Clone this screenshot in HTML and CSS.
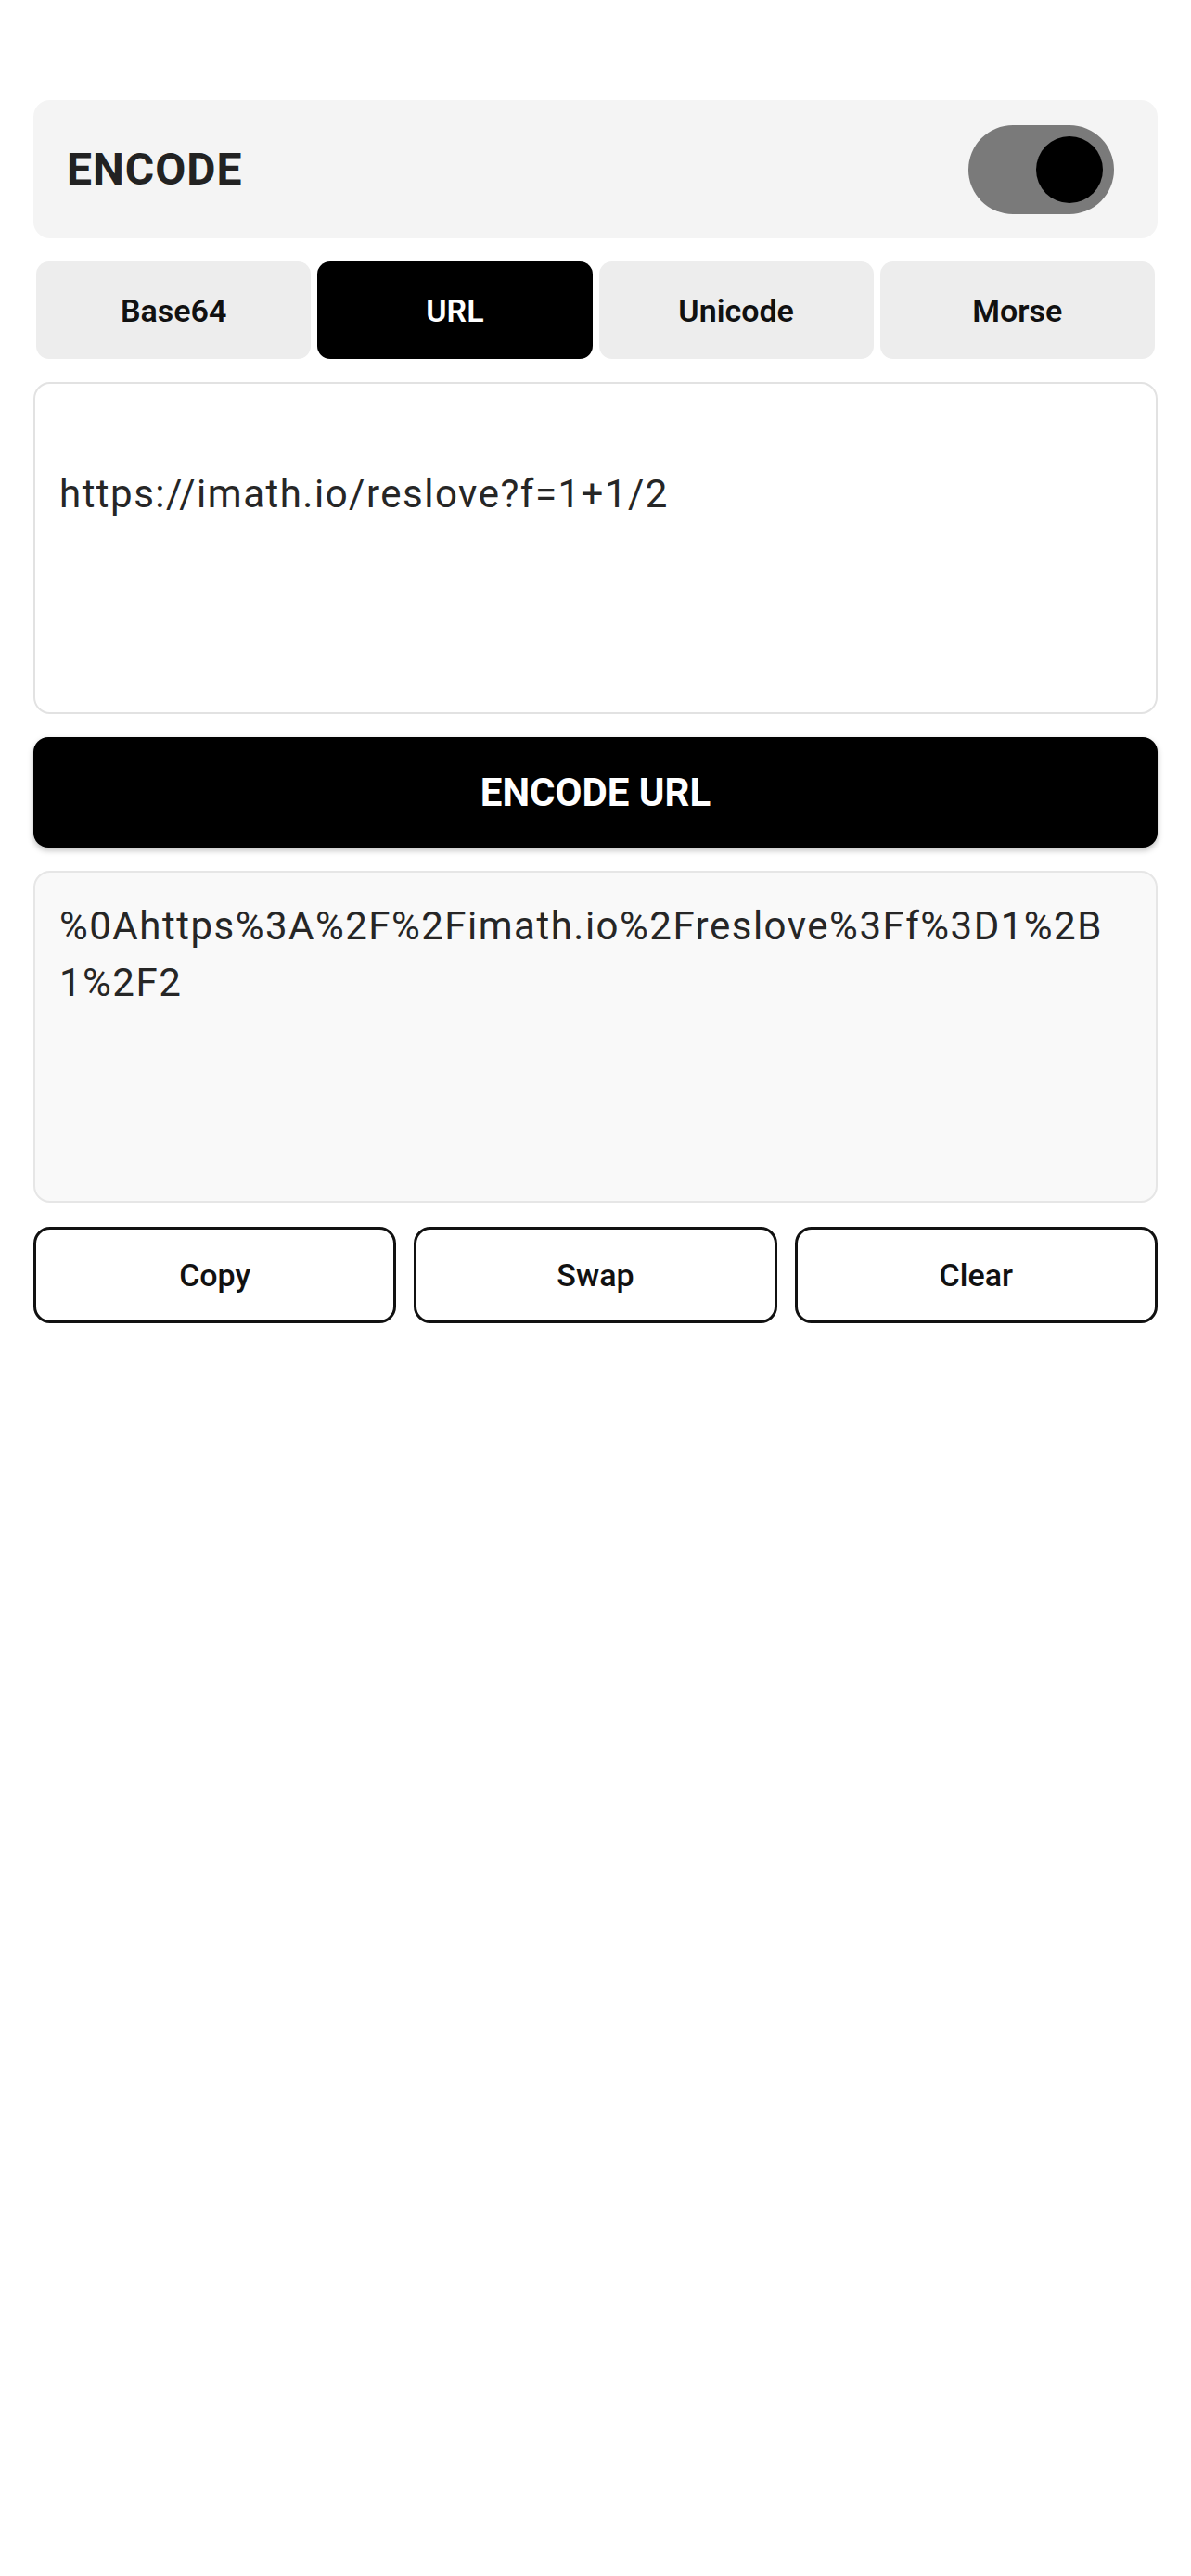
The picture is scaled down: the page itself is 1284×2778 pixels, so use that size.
FILE: index.html
```html
<!DOCTYPE html>
<html lang="en">
<head>
<meta charset="utf-8">
<title>Encode</title>
<link rel="stylesheet" href="styles.css">
</head>
<body>
<main class="page">
  <section class="mode-card">
    <h1 class="mode-title">ENCODE</h1>
    <div class="toggle" role="switch" aria-checked="true"><span class="knob"></span></div>
  </section>

  <nav class="tabs">
    <button class="tab">Base64</button>
    <button class="tab active">URL</button>
    <button class="tab">Unicode</button>
    <button class="tab">Morse</button>
  </nav>

  <div class="field input-field">&#10;https://imath.io/reslove?f=1+1/2</div>

  <button class="primary">ENCODE URL</button>

  <div class="field output-field">%0Ahttps%3A%2F%2Fimath.io%2Freslove%3Ff%3D1%2B1%2F2</div>

  <div class="actions">
    <button class="outline">Copy</button>
    <button class="outline">Swap</button>
    <button class="outline">Clear</button>
  </div>
</main>
</body>
</html>
```

FILE: styles.css
```css
* { box-sizing: border-box; }

html, body {
  margin: 0;
  padding: 0;
  background: #ffffff;
}

body {
  font-family: Roboto, "Liberation Sans", Arial, sans-serif;
  color: #1f1f1f;
}

.page {
  width: 1284px;
  padding: 108px 36px 0;
  display: flex;
  flex-direction: column;
  gap: 25px;
}

.mode-card {
  height: 149px;
  background: #f4f4f4;
  border-radius: 18px;
  display: flex;
  align-items: center;
  justify-content: space-between;
  padding: 0 47px 0 36px;
}

.mode-title {
  margin: 0;
  font-size: 48px;
  font-weight: 700;
  color: #222222;
  letter-spacing: 1px;
}

.toggle {
  width: 157px;
  height: 96px;
  border-radius: 48px;
  background: #7a7a7a;
  display: flex;
  align-items: center;
  justify-content: flex-end;
  padding-right: 12px;
}

.knob {
  width: 72px;
  height: 72px;
  border-radius: 50%;
  background: #000000;
}

.tabs {
  display: flex;
  gap: 7px;
  padding: 0 3px;
}

.tab {
  flex: 1;
  height: 105px;
  border: none;
  border-radius: 14px;
  background: #ededed;
  font-family: Roboto, "Liberation Sans", Arial, sans-serif;
  font-size: 34px;
  font-weight: 600;
  color: #111111;
  padding: 0;
}

.tab.active {
  background: #000000;
  color: #ffffff;
}

.field {
  height: 358px;
  border: 2px solid #e2e2e2;
  border-radius: 18px;
  padding: 27px 46px 0 26px;
  font-size: 42px;
  line-height: 61px;
  letter-spacing: 1.5px;
  color: #262626;
  white-space: pre-wrap;
  word-break: break-all;
}

.input-field {
  background: #ffffff;
}

.output-field {
  background: #f9f9f9;
  border-color: #e6e6e6;
}

.primary {
  height: 119px;
  border: none;
  border-radius: 16px;
  background: #000000;
  color: #ffffff;
  font-family: Roboto, "Liberation Sans", Arial, sans-serif;
  font-size: 42px;
  font-weight: 700;
  box-shadow: 0 3px 6px rgba(0, 0, 0, 0.25);
}

.actions {
  display: flex;
  gap: 19px;
  margin-top: 1px;
}

.outline {
  flex: 1;
  height: 104px;
  border: 3px solid #111111;
  border-radius: 18px;
  background: #ffffff;
  font-family: Roboto, "Liberation Sans", Arial, sans-serif;
  font-size: 34px;
  font-weight: 500;
  color: #111111;
}
```
